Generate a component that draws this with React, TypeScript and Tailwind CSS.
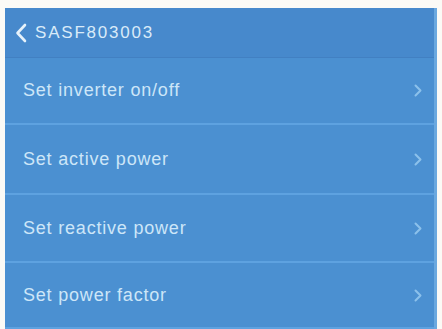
const items = [
  { label: 'Set inverter on/off', h: 'h-[67px]' },
  { label: 'Set active power', h: 'h-[70px]' },
  { label: 'Set reactive power', h: 'h-[68px]' },
  { label: 'Set power factor', h: 'h-[66px]' },
]

export default function App() {
  return (
    <div className="w-[442px] h-[329px] bg-[#fbfaf6] pt-[8px] pl-[5px] pr-[5px] overflow-hidden font-['Liberation_Sans',Arial,sans-serif]">
      <div className="h-full bg-[#4b90d1] border-r-[3px] border-[#6aa8df]">
        {/* Header */}
        <div className="h-[50px] flex items-center bg-[#4789cc] border-b border-[#4280c2] pl-[10px]">
          <svg width="12" height="20" viewBox="0 0 12 20" className="text-[#e6f2fb]">
            <polyline points="10,2 2.5,10 10,18" fill="none" stroke="currentColor" strokeWidth="2.6" strokeLinecap="round" strokeLinejoin="round" />
          </svg>
          <span className="text-[17px] text-[#d9ebf9] tracking-[1.8px] ml-[8px]">SASF803003</span>
        </div>

        {/* Menu rows */}
        {items.map((item) => (
          <div
            key={item.label}
            className={`${item.h} flex items-center justify-between pl-[18px] pr-[12px] border-b-2 border-[#5ea2e0]`}
          >
            <span className="text-[18px] text-[#cde6f8] tracking-[0.8px]">{item.label}</span>
            <svg width="8" height="13" viewBox="0 0 8 13" className="text-[#8cc1eb]">
              <polyline points="1.5,1.5 6.5,6.5 1.5,11.5" fill="none" stroke="currentColor" strokeWidth="2" strokeLinecap="round" strokeLinejoin="round" />
            </svg>
          </div>
        ))}
      </div>
    </div>
  )
}
